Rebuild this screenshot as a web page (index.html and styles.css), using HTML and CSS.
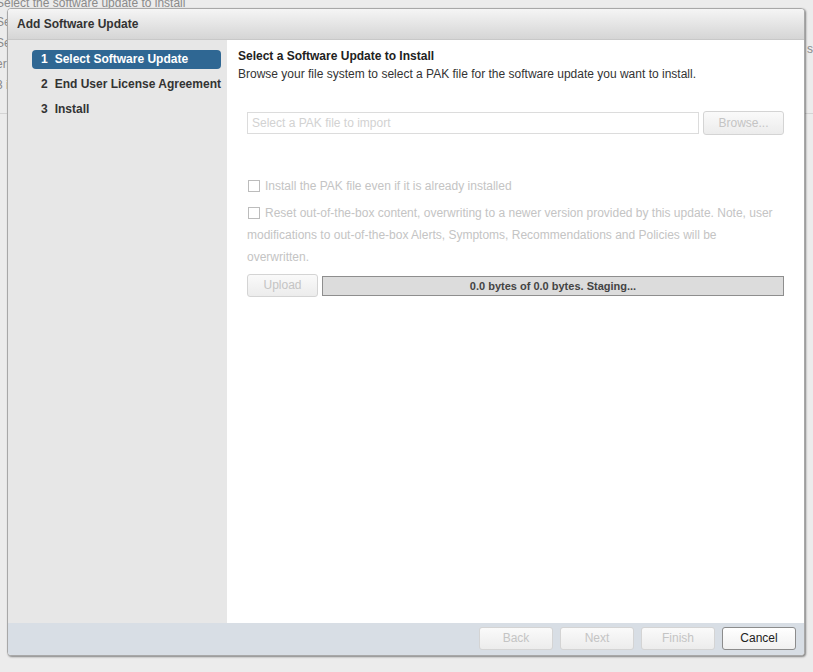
FILE: index.html
```html
<!DOCTYPE html>
<html>
<head>
<meta charset="utf-8">
<link rel="stylesheet" href="styles.css">
</head>
<body>
<div class="page">
  <div class="bg-line bg-top">Select the software update to install</div>
  <div class="bg-line">Settings</div>
  <div class="bg-line">Server software status</div>
  <div class="bg-line">error</div>
  <div class="bg-line">3 items</div>
  <div class="bg-rule"></div>
  <div class="bg-right">s</div>
</div>
<div class="dialog">
  <div class="dialog-header">Add Software Update</div>
  <div class="dialog-body">
    <div class="steps">
      <div class="step active"><span class="num">1</span>Select Software Update</div>
      <div class="step"><span class="num">2</span>End User License Agreement</div>
      <div class="step"><span class="num">3</span>Install</div>
    </div>
    <div class="content">
      <div class="heading">Select a Software Update to Install</div>
      <div class="desc">Browse your file system to select a PAK file for the software update you want to install.</div>
      <div class="form">
        <div class="file-row">
          <div class="file-input">Select a PAK file to import</div>
          <div class="btn disabled browse">Browse...</div>
        </div>
        <div class="check-row first"><span class="cb"></span>Install the PAK file even if it is already installed</div>
        <div class="check-row wrap"><span class="cb"></span>Reset out-of-the-box content, overwriting to a newer version provided by this update. Note, user modifications to out-of-the-box Alerts, Symptoms, Recommendations and Policies will be overwritten.</div>
        <div class="upload-row">
          <div class="btn disabled upload">Upload</div>
          <div class="progress">0.0 bytes of 0.0 bytes. Staging...</div>
        </div>
      </div>
    </div>
  </div>
  <div class="dialog-footer">
    <div class="btn disabled foot">Back</div>
    <div class="btn disabled foot">Next</div>
    <div class="btn disabled foot">Finish</div>
    <div class="btn foot cancel">Cancel</div>
  </div>
</div>
</body>
</html>
```

FILE: styles.css
```css
* { box-sizing: border-box; }
html, body { margin: 0; padding: 0; }
body {
  width: 813px;
  height: 672px;
  background: #ececec;
  font-family: "Liberation Sans", Arial, sans-serif;
  font-size: 12px;
  color: #333;
  overflow: hidden;
  position: relative;
}
.page {
  color: #8a8a8a;
  font-size: 12px;
}
.bg-line {
  margin-left: -4px;
  line-height: 21px;
  white-space: nowrap;
}
.bg-top { margin-top: -6px; line-height: 18px; }
.bg-rule {
  margin-top: 17px;
  border-top: 1px solid #d4d4d4;
}
.bg-right {
  position: absolute;
  right: 0;
  top: 42px;
  width: 6px;
  overflow: hidden;
}

.dialog {
  position: absolute;
  left: 7px;
  top: 8px;
  width: 798px;
  height: 648px;
  border: 1px solid #a8a8a8;
  border-radius: 4px;
  box-shadow: 1px 1px 2px rgba(0,0,0,0.45);
  display: flex;
  flex-direction: column;
  overflow: hidden;
  background: #fff;
}
.dialog-header {
  height: 31px;
  flex: none;
  background: linear-gradient(#f5f5f5, #d5d5d5);
  border-bottom: 1px solid #c8c8c8;
  padding-left: 9px;
  line-height: 30px;
  font-weight: bold;
  color: #333;
  font-size: 12px;
}
.dialog-body {
  flex: 1;
  display: flex;
  min-height: 0;
}
.steps {
  width: 219px;
  flex: none;
  background: #e7e7e7;
  padding: 10px 0 0 24px;
}
.step {
  height: 19px;
  line-height: 19px;
  margin-bottom: 6px;
  padding-left: 9px;
  width: 189px;
  font-weight: bold;
  color: #333;
  white-space: nowrap;
}
.step .num { margin-right: 7px; }
.step.active {
  background: #2f6793;
  color: #fff;
  border-radius: 4px;
}
.content {
  flex: 1;
  padding: 8px 20px 0 11px;
}
.heading {
  font-weight: bold;
  color: #222;
  line-height: 16px;
}
.desc {
  line-height: 18px;
  color: #333;
  margin-top: 1px;
}
.form {
  margin-top: 28px;
  padding-left: 9px;
}
.file-row {
  display: flex;
  align-items: center;
  gap: 4px;
}
.file-input {
  flex: 1;
  height: 22px;
  border: 1px solid #dcdcdc;
  color: #d2d2d2;
  line-height: 20px;
  padding-left: 4px;
}
.btn {
  height: 24px;
  border: 1px solid #bdbdbd;
  border-radius: 3px;
  text-align: center;
  line-height: 22px;
  background: linear-gradient(#fdfdfd, #ececec);
  color: #222;
}
.btn.disabled {
  border-color: #d4d4d4;
  color: #c4c4c4;
  background: linear-gradient(#fafafa, #ececec);
}
.browse { width: 81px; }
.check-row {
  line-height: 22px;
  color: #c4c4c4;
  margin-top: 5px;
}
.check-row.first { margin-top: 40px; }
.check-row.wrap { padding-right: 9px; }
.cb {
  display: inline-block;
  width: 12px;
  height: 12px;
  border: 1px solid #bcbcbc;
  background: #fff;
  vertical-align: -2px;
  margin: 0 5px 0 1px;
}
.upload-row {
  display: flex;
  align-items: center;
  gap: 4px;
  margin-top: 6px;
}
.upload {
  width: 71px;
  height: 23px;
  line-height: 21px;
}
.progress {
  flex: 1;
  height: 20px;
  border: 1px solid #8e8e8e;
  background: #dcdcdc;
  text-align: center;
  font-weight: bold;
  color: #444;
  font-size: 11px;
  line-height: 18px;
}
.dialog-footer {
  height: 32px;
  flex: none;
  background: #d8dee5;
  display: flex;
  justify-content: flex-end;
  gap: 7px;
  padding: 4px 8px 0 0;
}
.foot {
  width: 74px;
  height: 23px;
  line-height: 21px;
}
.cancel {
  border-color: #8c8c8c;
  color: #222;
  background: linear-gradient(#ffffff, #f0f0f0);
}
```
